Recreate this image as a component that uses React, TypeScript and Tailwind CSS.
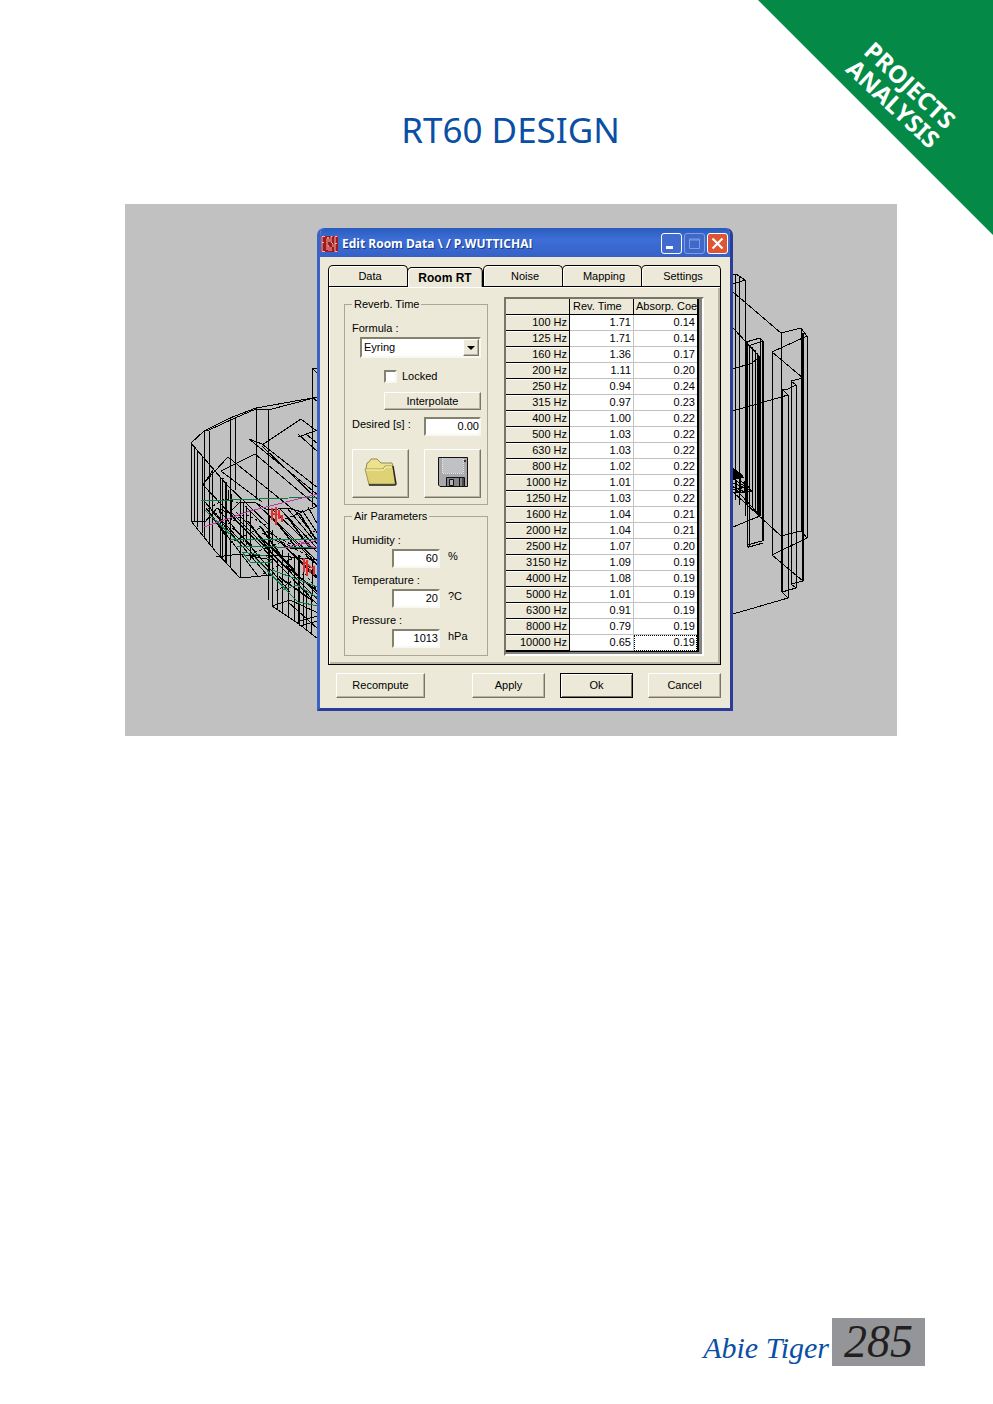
import React from "react";

type Row = [string, string, string];

const rows: Row[] = [
  ["100 Hz", "1.71", "0.14"],
  ["125 Hz", "1.71", "0.14"],
  ["160 Hz", "1.36", "0.17"],
  ["200 Hz", "1.11", "0.20"],
  ["250 Hz", "0.94", "0.24"],
  ["315 Hz", "0.97", "0.23"],
  ["400 Hz", "1.00", "0.22"],
  ["500 Hz", "1.03", "0.22"],
  ["630 Hz", "1.03", "0.22"],
  ["800 Hz", "1.02", "0.22"],
  ["1000 Hz", "1.01", "0.22"],
  ["1250 Hz", "1.03", "0.22"],
  ["1600 Hz", "1.04", "0.21"],
  ["2000 Hz", "1.04", "0.21"],
  ["2500 Hz", "1.07", "0.20"],
  ["3150 Hz", "1.09", "0.19"],
  ["4000 Hz", "1.08", "0.19"],
  ["5000 Hz", "1.01", "0.19"],
  ["6300 Hz", "0.91", "0.19"],
  ["8000 Hz", "0.79", "0.19"],
  ["10000 Hz", "0.65", "0.19"],
];

const tabs = ["Data", "Room RT", "Noise", "Mapping", "Settings"];

const airParameters = [
  { id: "humidity", label: "Humidity :", value: "60", unit: "%" },
  { id: "temperature", label: "Temperature :", value: "20", unit: "?C" },
  { id: "pressure", label: "Pressure :", value: "1013", unit: "hPa" },
];

const raised =
  "border border-t-white border-l-white border-r-[#77756a] border-b-[#77756a] bg-[#ece9d8] shadow-[inset_-1px_-1px_0_#b8b5a4]";
const sunken =
  "border-2 border-t-[#84816f] border-l-[#84816f] border-r-[#f8f7f0] border-b-[#f8f7f0] bg-white";

function Wireframe() {
  return (
    <svg
      className="absolute left-0 top-0 h-[532px] w-[772px]"
      viewBox="125 204 772 532"
      fill="none"
      stroke="#000"
      strokeWidth="1"
      shapeRendering="crispEdges"
      aria-hidden="true"
    >
      {/* left hall shell */}
      <path d="M191 443L204 431L230 418L256 408L318 397M204 431L209 430L235 418L256 409L268 410L318 397M312 368H318M312 368L318 374M312 397L318 402" />
      <path d="M191 443V521M194 447V521M197 450V527M202 456V533M204 431V539M209 431V545M212 470V548M230 418V568M235 418V490M256 408V500M268 410V600M312 368V507" />
      <path d="M191 443L227 485L268 524M202 485L228 457L300 515M221 471L255 454L318 507M221 471L262 502M262 445L301 419L318 432M249 439L262 444L318 488M249 439L318 495M262 446L318 500M298 434L318 452M298 437L318 430M306 434L318 444M203 485L213 470M203 485L260 545" />
      <path d="M220 478V556M222 478V558M225 482V562M226 482V563M228 490V500M231 494V520M220 478H224" />
      <path d="M191 521L216 552L240 578L272 575M191 521H206L217 508L229 513L240 502L256 503L268 510L288 508L302 512L318 506M216 557L240 554L272 560" />
      <path d="M240 500V578M243 503V542M246 506V545M250 512V560M269 515V575M272 530V606M277 560V609M282 550V613M288 553V617M294 558V620M298 556V624M299 556V626M303 568V626M306 590V630M311 595V633M312 560V596" />
      <path d="M272 606L299 624L318 639M272 606L290 600L318 613M299 626L318 621M299 621L318 616M288 602L318 629M245 556L272 555L318 560M262 533L290 548L318 548" />
      {/* tiered seating */}
      <path d="M203 500L272 575M206 508L258 576M211 510L268 576M217 508L290 592M223 507L318 605M230 511L318 600M236 512L318 595M245 506L318 579M256 503L318 565M264 510L318 562M272 509L318 553M279 508L318 549M287 508L318 545M295 511L318 541M302 510L318 534M308 507L318 525" />
      <path d="M214 519L225 535M233 528L252 546M248 521L270 551M260 526L284 560M275 520L297 549M289 519L310 548M300 514L316 540M268 543L294 570M281 542L310 572M293 554L317 578M306 556L318 565M286 566L318 592M279 577L313 601" strokeWidth="1.5" />
      <path d="M204 511L225 499L240 503M220 529L245 514L272 528M230 543L260 528L298 548M245 556L282 542L318 561M263 574L299 555L318 578M276 591L305 573L318 592M206 520L220 512M285 519L303 512M300 540L318 529" strokeDasharray="3 2" />
      <path d="M201 501L318 497M229 539L318 540M236 546L318 548M242 552L266 556L272 562L251 563L242 552M282 590L297 585L318 598M299 602L318 606M205 510L240 544M272 570L318 587M255 558L300 604" stroke="#0d7744" />
      <path d="M204 527L250 511L318 494M285 548L318 540M299 541L318 549" stroke="#b63aa0" />
      <path d="M272 508V520M276 507V525M279 510V519M282 515V522M272 514H276L283 517M304 558V572M307 560V576M310 569V573M314 566V575M304 562L315 570" stroke="#e32e2e" strokeWidth="1.5" />

      {/* right hall shell */}
      <path d="M733 274H736L745 280M733 284L745 280M735 274V500M739 276V505M745 280V516M733 292L781 333L801 328L807 336L772 352L803 378L791 381L796 385L788 389L782 389L788 395L733 411M733 328L760 357M733 369L752 363L760 357M746 342L760 338L763 341L748 346" />
      <path d="M747 341V545M749 345V547M752 347V507M755 350V510M757 353V512M760 338V516M762 341V541M763 341V541M781 333V536M788 395V598M791 381V584M796 385V588M801 328V532M807 336V538M772 352V555" />
      <path d="M746 341V505M759 356V515M782 389V592M803 333V581" strokeWidth="2" />
      <path d="M733 492L781 536L801 531L807 538L772 555L803 581L791 584L796 588L782 592L788 598L733 614M733 527L760 516M747 545L762 541M749 547L763 543M762 541L747 545L749 548M733 486L760 516" />
      <path d="M733 468L743 477H733ZM733 479L748 488M733 483L752 491M733 487L745 492H733M738 478L752 491H742M736 480V492M740 478V493M744 481V492M733 490L750 486" />
      <path d="M733 468L743 476L733 480Z" fill="#000" />
    </svg>
  );
}

function FolderIcon() {
  return (
    <svg className="h-8 w-9" viewBox="0 0 36 32" aria-hidden="true">
      <path d="M3 13L4 7L6 6L8 3H14L18 7H29L30 10V29H6Z" fill="#ece28c" stroke="#8f8a5c" />
      <path d="M2 13H20L22 10H30L32 28H6Z" fill="#dfd274" stroke="#a69b50" />
      <path d="M3 14H20.500L22.500 11H29" fill="none" stroke="#fff8c0" />
      <path d="M30 10L33 28L32 29H6" fill="none" stroke="#292820" strokeWidth="1.5" />
    </svg>
  );
}

function FloppyIcon() {
  return (
    <svg className="h-8 w-8" viewBox="0 0 32 32" aria-hidden="true">
      <path d="M1.500 1.500H30.500V30.500H3L1.500 29Z" fill="#a9a9ab" stroke="#111" />
      <path d="M5 2H26V17H5Z" fill="#c0c1c4" />
      <path d="M5.500 2V17.500H26.500V2" fill="none" stroke="#e8e8ea" strokeDasharray="1 1" />
      <path d="M28 4V6" stroke="#111" strokeWidth="1.500" />
      <path d="M9.500 21.500H27.500V30.500H9.500Z" fill="#85858a" stroke="#111" />
      <path d="M12.500 23.500H16.500V29.500H12.500Z" fill="#b5b5b7" stroke="#111" />
      <path d="M22.500 22V30M26 22V30" stroke="#111" />
    </svg>
  );
}

function TitleBar() {
  return (
    <div className="flex h-[29px] items-center gap-0.5 bg-linear-to-b from-[#2a5cbd] via-[#3d6ed6] via-40% to-[#3561c6] pl-px pr-0.5 pt-0.5">
      <svg className="h-4 w-[17px]" viewBox="0 0 17 16" aria-hidden="true">
        <path d="M0 0H17V16H0Z" fill="#a3191c" />
        <path
          d="M4 .5H1V15.500H4M1 6.500H3M6 14V3L7 1L8 3V6M11.500 .5H10V6L12 8V11M16.500 .5H14V15.500H16.500M14 7.500H16M7 9L8 11V15M10 11V15"
          fill="none"
          stroke="#f7dedb"
          strokeWidth=".8"
        />
      </svg>
      <h2 className="ml-0.5 flex-1 whitespace-nowrap font-['Open_Sans','Noto_Sans',sans-serif] text-[12px] font-bold leading-4 text-white [text-shadow:1px_1px_0_#173a8c]">
        Edit Room Data \ / P.WUTTICHAI
      </h2>
      <button aria-label="Minimize" className="h-[21px] w-[21px] rounded-[3px] border border-white bg-[#426bd0]">
        <svg className="h-[19px] w-[19px]" viewBox="0 0 19 19">
          <path d="M4 12H11V15H4Z" fill="#fff" />
        </svg>
      </button>
      <button aria-label="Maximize" className="h-[21px] w-[21px] rounded-[3px] border border-[#7f9ce0] bg-[#4068c8]">
        <svg className="h-[19px] w-[19px]" viewBox="0 0 19 19">
          <path d="M4.500 5H14.500V14.500H4.500ZM4 6H15" fill="none" stroke="#7f9ce0" />
        </svg>
      </button>
      <button aria-label="Close" className="h-[21px] w-[21px] rounded-[3px] border border-white bg-[#df5432]">
        <svg className="h-[19px] w-[19px]" viewBox="0 0 19 19">
          <path d="M4.500 4.500L14.500 14.500M14.500 4.500L4.500 14.500" stroke="#fff" strokeWidth="2.200" />
        </svg>
      </button>
    </div>
  );
}

function ReverbGroup() {
  return (
    <fieldset className="flex h-[208px] flex-col border border-[#aaa797] pl-[7px] pr-1.5">
      <legend className="px-0.5 leading-[14px]">Reverb. Time</legend>
      <label htmlFor="formula" className="mt-2.5 leading-[14px]">
        Formula :
      </label>
      <div className={`relative ml-2 mt-0.5 h-[21px] ${sunken}`}>
        <select id="formula" className="block h-full w-full appearance-none bg-transparent pl-0.5 leading-[17px] outline-none">
          <option>Eyring</option>
        </select>
        <span className={`pointer-events-none absolute inset-y-0 right-0 flex w-4 items-center justify-center ${raised}`}>
          <svg className="h-1 w-2" viewBox="0 0 8 4" aria-hidden="true">
            <path d="M0 0H8L4 4Z" />
          </svg>
        </span>
      </div>
      <label className="ml-8 mt-[11px] flex h-3.5 items-center gap-[5px]">
        <input type="checkbox" className={`h-[13px] w-[13px] appearance-none ${sunken}`} />
        Locked
      </label>
      <button className={`ml-8 mt-[9px] h-[18px] leading-4 ${raised}`}>Interpolate</button>
      <div className="mt-[7px] flex h-[19px] justify-between">
        <label htmlFor="desired" className="leading-[14px]">
          Desired [s] :
        </label>
        <input id="desired" defaultValue="0.00" className={`w-[57px] text-right outline-none ${sunken}`} />
      </div>
      <div className="mt-[13px] flex justify-between">
        <button aria-label="Open" className={`flex h-[49px] w-[57px] items-center justify-center pb-1 ${raised}`}>
          <FolderIcon />
        </button>
        <button aria-label="Save" className={`flex h-[49px] w-[57px] items-center justify-center pb-1 ${raised}`}>
          <FloppyIcon />
        </button>
      </div>
    </fieldset>
  );
}

function AirGroup() {
  return (
    <fieldset className="flex flex-col gap-[5px] border border-[#aaa797] pb-[7px] pl-[7px] pr-1.5">
      <legend className="px-0.5 leading-[14px]">Air Parameters</legend>
      {airParameters.map((p) => (
        <div key={p.id} className="flex flex-col gap-0.5 first-of-type:mt-2.5">
          <label htmlFor={p.id} className="leading-[14px]">
            {p.label}
          </label>
          <div className="ml-10 flex h-[19px] gap-2">
            <input id={p.id} defaultValue={p.value} className={`w-12 text-right outline-none ${sunken}`} />
            <span className="leading-[14px]">{p.unit}</span>
          </div>
        </div>
      ))}
    </fieldset>
  );
}

function FrequencyTable() {
  return (
    <div className="w-[200px] border-2 border-b-white border-l-[#77756a] border-r-white border-t-[#77756a] bg-[#85837e]">
      <table className="w-[193px] table-fixed border-separate border-spacing-0 border-b border-r-2 border-black text-right">
        <thead>
          <tr className="h-4">
            <th className="w-16 border-b border-r border-black bg-[#ece9d8] p-0" />
            <th className="w-16 border-b border-r border-black bg-[#ece9d8] p-0 pl-[3px] text-left font-normal leading-[15px]">
              Rev. Time
            </th>
            <th className="whitespace-nowrap border-b border-black bg-[#ece9d8] p-0 pl-0.5 text-left font-normal leading-[15px]">
              Absorp. Coe
            </th>
          </tr>
        </thead>
        <tbody>
          {rows.map(([hz, time, coefficient], i) => (
            <tr key={hz} className="h-4">
              <th className="border-b border-r border-black bg-[#ece9d8] p-0 pr-0.5 text-right font-normal leading-[15px] shadow-[inset_0_1px_0_#fff]">
                {hz}
              </th>
              <td className="border-b border-r border-[#c2c2c2] bg-white p-0 pr-0.5 leading-[15px]">{time}</td>
              <td
                className={
                  i === rows.length - 1
                    ? "border-b border-white bg-white p-0 pr-0.5 leading-[15px] outline-1 -outline-offset-1 outline-dotted outline-black"
                    : "border-b border-[#c2c2c2] bg-white p-0 pr-0.5 leading-[15px]"
                }
              >
                {coefficient}
              </td>
            </tr>
          ))}
        </tbody>
      </table>
    </div>
  );
}

function RoomDataDialog() {
  return (
    <section className="relative ml-[192px] w-[416px] overflow-hidden rounded-t-[7px] border-x-[3px] border-b-[3px] border-b-[#2b3c99] border-l-[#3c63c4] border-r-[#2b3c99] bg-[#ece9d8] font-['Liberation_Sans',Arial,sans-serif] text-[11px] text-black">
      <TitleBar />
      <div className="pb-2.5 pl-2 pr-[9px] pt-2">
        <div role="tablist" className="flex h-[21px]">
          {tabs.map((tab) => (
            <button
              key={tab}
              role="tab"
              aria-selected={tab === "Room RT"}
              className={
                tab === "Room RT"
                  ? "relative z-10 -mb-px mt-0.5 flex-1 rounded-t-[5px] border border-b-0 border-black bg-[#ece9d8] text-[12px] font-bold shadow-[inset_1px_1px_0_#fff,inset_-1px_0_0_#aaa797]"
                  : "-mr-px flex-1 rounded-t-[5px] border border-b-0 border-black bg-[#ece9d8] pl-1 shadow-[inset_1px_1px_0_#fff] last:mr-0"
              }
            >
              {tab}
            </button>
          ))}
        </div>
        <div className="flex gap-4 border border-black pb-2 pl-[15px] pr-4 pt-2.5 shadow-[inset_1px_1px_0_#fff,inset_-2px_-2px_0_#b9b6a6]">
          <div className="flex min-w-0 flex-1 flex-col gap-1">
            <ReverbGroup />
            <AirGroup />
          </div>
          <FrequencyTable />
        </div>
        <div className="mt-2 flex h-[25px] gap-[15px] pl-2">
          <button className={`mr-auto w-[89px] ${raised}`}>Recompute</button>
          <button className={`w-[73px] ${raised}`}>Apply</button>
          <button className="w-[73px] border border-black bg-[#ece9d8] shadow-[inset_1px_1px_0_#fff,inset_-1px_-1px_0_#77756a]">
            Ok
          </button>
          <button className={`w-[73px] ${raised}`}>Cancel</button>
        </div>
      </div>
    </section>
  );
}

export default function App() {
  return (
    <div className="relative flex min-h-screen flex-col overflow-hidden bg-white">
      <aside className="absolute right-0 top-0 h-[235px] w-[235px] bg-[#048a46] [clip-path:polygon(0_0,100%_0,100%_100%)]">
        <p className="absolute left-[144px] top-[94px] -translate-x-1/2 -translate-y-1/2 rotate-[43deg] text-center font-['Noto_Sans',sans-serif] text-[24px] font-bold leading-[25px] text-white">
          PROJECTS
          <br />
          ANALYSIS
        </p>
      </aside>
      <header className="pl-7 pt-[104px]">
        <h1 className="text-center font-['Noto_Sans',sans-serif] text-[35px] leading-[52px] text-[#0a4fa3]">RT60 DESIGN</h1>
      </header>
      <main className="relative ml-[125px] mr-24 mt-12 overflow-hidden bg-[#c1c1c1] pb-[25px] pt-6">
        <Wireframe />
        <RoomDataDialog />
      </main>
      <footer className="mr-[68px] mt-auto flex items-center justify-end gap-[3px] pb-[38px] italic">
        <span className="pt-3 font-['Liberation_Serif',serif] text-[30px] leading-9 text-[#0a4fa3]">Abie Tiger</span>
        <span className="h-12 w-[93px] bg-[#939598] text-center font-['Liberation_Serif',serif] text-[46px] leading-[48px] text-[#231f20]">
          285
        </span>
      </footer>
    </div>
  );
}
